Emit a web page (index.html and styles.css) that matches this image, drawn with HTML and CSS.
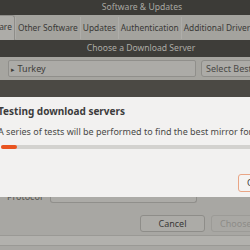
FILE: index.html
```html
<!DOCTYPE html>
<html lang="en">
  <head>
    <meta charset="UTF-8">
    <title>Software &amp; Updates</title>
    <link rel="stylesheet" href="styles.css">
  </head>
  <body>
    <div id="window">
      <div class="titlebar">Software &amp; Updates</div>
      <div class="tabs">
        <div class="tab active">Ubuntu Software</div>
        <div class="tab">Other Software</div>
        <div class="tab">Updates</div>
        <div class="tab">Authentication</div>
        <div class="tab">Additional Drivers</div>
      </div>
      <div class="titlebar sub">Choose a Download Server</div>
      <div class="server_row">
        <div class="entry"><span class="arrow">&#9656;</span>Turkey</div>
        <div class="btn">Select Best Server</div>
      </div>
      <div class="band"></div>

      <div id="testing">
        <div class="heading">Testing download servers</div>
        <div class="message">A series of tests will be performed to find the best mirror for your location.</div>
        <div class="progress"><div class="fill" style="width: 16px"></div></div>
        <div class="actions">
          <div class="btn focus">Cancel</div>
        </div>
      </div>

      <div class="bottom">
        <div class="proto_row">
          <div class="label">Protocol</div>
          <div class="entry short"></div>
        </div>
        <div class="buttons">
          <div class="btn">Cancel</div>
          <div class="btn disabled">Choose Server</div>
        </div>
      </div>
      <div class="statusbar"></div>
    </div>
  </body>
</html>
```

FILE: styles.css
```css
body {
  margin: 0;
  width: 250px;
  height: 250px;
  overflow: hidden;
  background-color: #a8a7a3;
  font-family: "Noto Sans", "DejaVu Sans", sans-serif;
  font-size: 9px;
  color: #3a3937;
}
#window {
  width: 250px;
  overflow: hidden;
}
.titlebar {
  height: 15px;
  line-height: 15px;

  background-color: #3c3b37;
  color: #a9a8a2;

  padding-left: 34px;
  text-align: center;
  font-size: 8.6px;
  white-space: nowrap;
}
.titlebar.sub {
  height: 17px;
  line-height: 17px;
  background-color: #3e3d39;
  color: #adaca6;
  padding-left: 32px;
}
.tabs {
  height: 25px;
  display: flex;
  flex-direction: row;
  align-items: center;

  margin-left: -58px;
  background-color: #a4a39e;
  font-size: 8.4px;
  white-space: nowrap;
}
.tab {
  flex-shrink: 0;
  height: 22px;
  line-height: 22px;
  padding: 0 2px;
  border-left: 1px solid #aeada9;
}
.tab.active {
  height: 24px;
  background-color: #adaca8;
  border: 1px solid #8e8d89;
  border-bottom: none;
  border-radius: 3px 3px 0 0;
}
.server_row {
  height: 23px;
  display: flex;
  flex-direction: row;
  align-items: center;

  padding-left: 8px;
  background-color: #a6a5a0;
  white-space: nowrap;
}
.entry {
  flex-shrink: 0;
  width: 186px;
  height: 15px;
  line-height: 15px;

  background-color: #acaba7;
  border: 1px solid #908f8b;
  border-radius: 2px;
  color: #3e3d3a;
}
.arrow {
  font-size: 7px;
  margin: 0 3px 0 2px;
}
.btn {
  flex-shrink: 0;
  height: 15px;
  line-height: 15px;
  padding: 0 8px;

  background-color: #acaba7;
  border: 1px solid #8e8d89;
  border-radius: 3px;
  white-space: nowrap;
}
.server_row .btn {
  margin-left: 5px;
  padding: 0 4px;
  color: #4a4946;
}
.band {
  height: 17px;
  background-color: #4b4944;
}
#testing {
  height: 100px;
  background-color: #f2f1f0;

  margin-left: -2px;
  white-space: nowrap;
  color: #3c3c3c;
}
.heading {
  padding-top: 7px;
  font-weight: bold;
  font-size: 10px;
}
.message {
  padding-top: 7px;
  color: #4a4a48;
}
.progress {
  width: 260px;
  height: 4px;
  margin-top: 7px;
  margin-left: 3px;

  background-color: #d3d2cf;
  border-radius: 2px;
}
.fill {
  height: 4px;
  background-color: #e95420;
  border-radius: 2px;
}
.actions {
  display: flex;
  flex-direction: row;
  padding-top: 25px;
  padding-left: 240px;
}
.btn.focus {
  height: 16px;
  background-color: #f4f3f2;
  border-color: #e9a585;
  color: #3c3c3c;
}
.bottom {
  height: 38px;
  background-color: #a8a7a3;
  white-space: nowrap;
}
.proto_row {
  height: 6px;
  display: flex;
  flex-direction: row;
  align-items: flex-end;
  overflow: hidden;
  padding-left: 7px;
}
.label {
  flex-shrink: 0;
  width: 43px;
  height: 12px;
  line-height: 12px;
  color: #55544f;
}
.entry.short {
  width: 145px;
  height: 10px;
  border-top: none;
  border-radius: 0 0 3px 3px;
}
.buttons {
  display: flex;
  flex-direction: row;
  padding-top: 12px;
  padding-left: 140px;
}
.buttons .btn {
  box-sizing: border-box;
  width: 65px;
  height: 17px;
  line-height: 15px;
  text-align: center;
}
.buttons .btn.disabled {
  margin-left: 6px;
  color: #8d8c88;
  border-color: #9c9b97;
  background-color: #a9a8a4;
}
.statusbar {
  height: 9px;
  background-color: #b2b1ad;
  border-top: 1px solid #9a9995;
  border-bottom: 1px solid #9a9995;
}
```
